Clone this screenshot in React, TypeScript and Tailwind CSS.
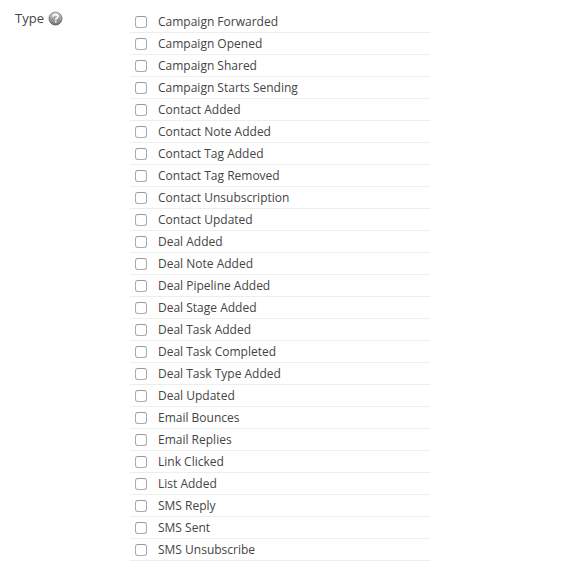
import { useState } from "react";

const TYPES = [
  "Campaign Forwarded",
  "Campaign Opened",
  "Campaign Shared",
  "Campaign Starts Sending",
  "Contact Added",
  "Contact Note Added",
  "Contact Tag Added",
  "Contact Tag Removed",
  "Contact Unsubscription",
  "Contact Updated",
  "Deal Added",
  "Deal Note Added",
  "Deal Pipeline Added",
  "Deal Stage Added",
  "Deal Task Added",
  "Deal Task Completed",
  "Deal Task Type Added",
  "Deal Updated",
  "Email Bounces",
  "Email Replies",
  "Link Clicked",
  "List Added",
  "SMS Reply",
  "SMS Sent",
  "SMS Unsubscribe",
];

function HelpIcon() {
  return (
    <svg className="mb-px" width="15" height="15" viewBox="0 0 15 15" aria-hidden>
      <defs>
        <linearGradient id="help-fill" x1="0" y1="0" x2="0" y2="1">
          <stop offset="0" stopColor="#cfcfcf" />
          <stop offset="1" stopColor="#747474" />
        </linearGradient>
        <linearGradient id="help-edge" x1="0" y1="0" x2="0" y2="1">
          <stop offset="0" stopColor="#999" />
          <stop offset="1" stopColor="#5c5c5c" />
        </linearGradient>
      </defs>
      <circle cx="7.5" cy="7.5" r="6.5" fill="url(#help-fill)" stroke="url(#help-edge)" />
      <path
        d="M5 5.8c0-1.5 1-2.2 2.5-2.2s2.4.8 2.4 2c0 1.6-2.2 1.6-2.2 3.2M7.7 9.8v1.8"
        fill="none"
        stroke="#fff"
        strokeWidth="1.6"
      />
    </svg>
  );
}

type RowProps = {
  label: string;
  checked: boolean;
  toggle: () => void;
};

function TypeRow({ label, checked, toggle }: RowProps) {
  return (
    <label className="flex h-[22px] items-center border-b border-[#eeeeee] pl-[5px]">
      <input
        type="checkbox"
        checked={checked}
        onChange={toggle}
        className="size-3 shrink-0 appearance-none rounded-[3px] border border-[#ababab] border-t-[#999999] bg-white checked:bg-[#3b82f6]"
      />
      <span className="ml-[11px] text-xs leading-[21px]">{label}</span>
    </label>
  );
}

export default function App() {
  const [selected, setSelected] = useState<string[]>([]);

  const toggle = (type: string) =>
    setSelected((prev) =>
      prev.includes(type) ? prev.filter((t) => t !== type) : [...prev, type]
    );

  return (
    <div className="flex h-[568px] w-[574px] bg-white pt-[11px] font-['Open_Sans',sans-serif] text-[#444444]">
      <div className="flex h-4 w-[130px] shrink-0 items-center gap-1 pl-[15px] text-[13px]">
        Type <HelpIcon />
      </div>
      <div className="w-[300px]">
        {TYPES.map((type) => (
          <TypeRow
            key={type}
            label={type}
            checked={selected.includes(type)}
            toggle={() => toggle(type)}
          />
        ))}
      </div>
    </div>
  );
}
